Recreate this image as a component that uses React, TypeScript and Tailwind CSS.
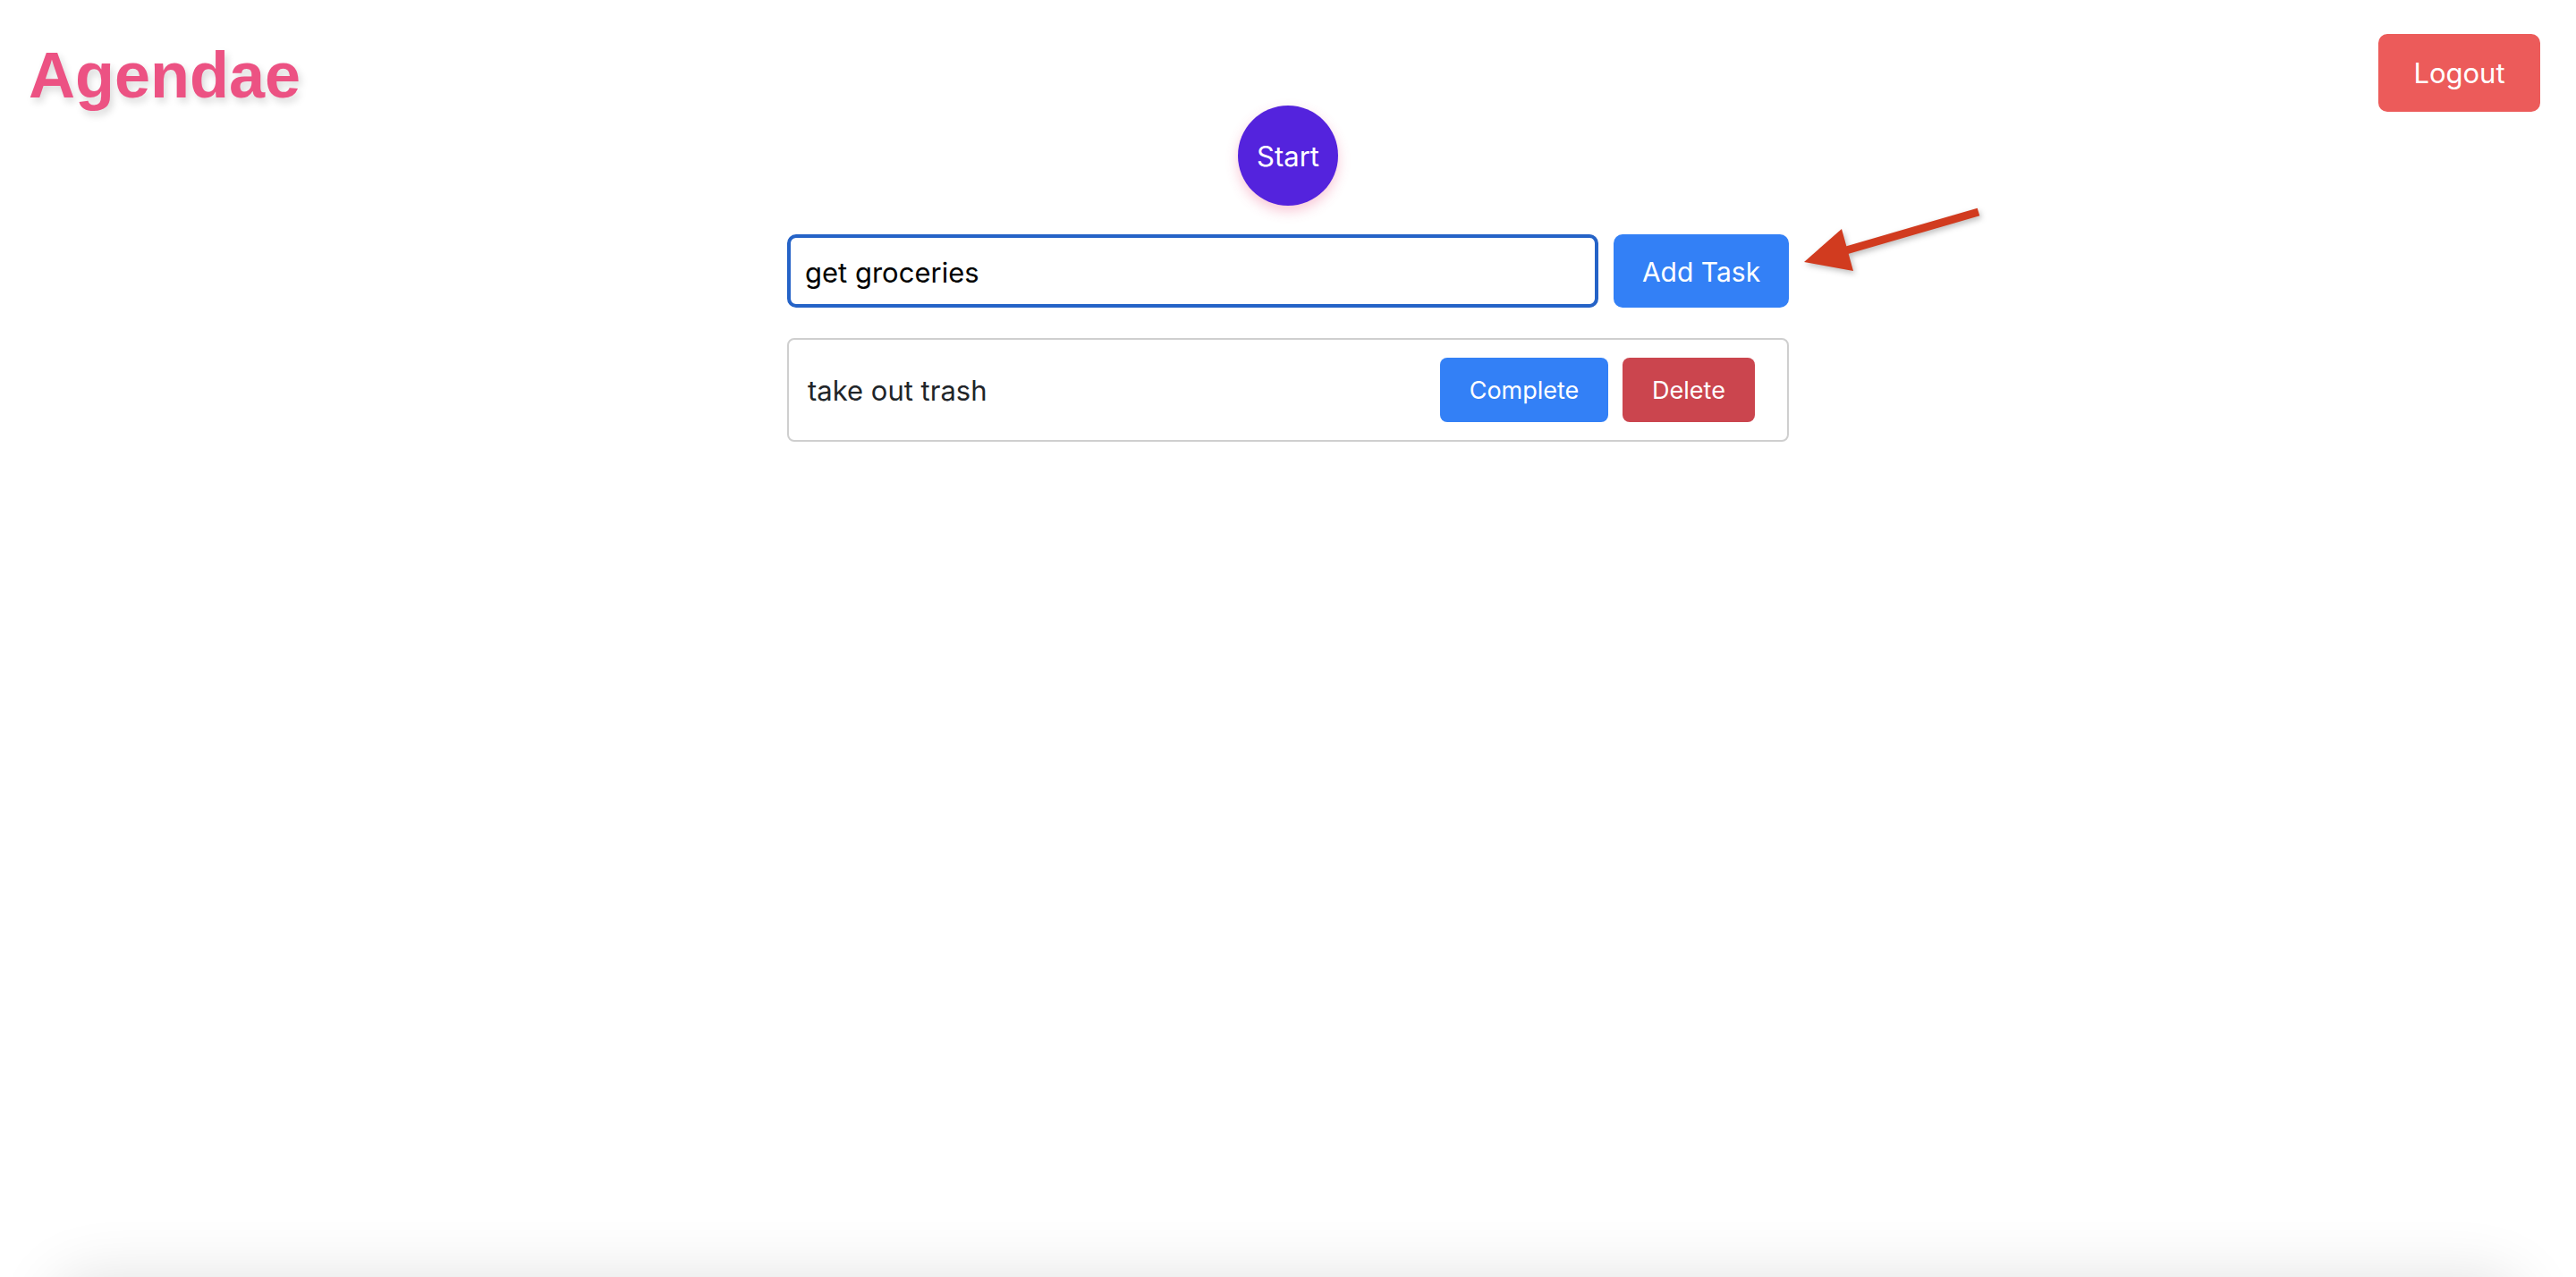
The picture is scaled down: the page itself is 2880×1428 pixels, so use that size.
const Arrow = () => {
  return (
    <svg
      className="absolute left-[2000px] top-[220px] drop-shadow-[2px_3px_3px_rgba(0,0,0,0.25)]"
      width="230"
      height="100"
      viewBox="0 0 230 100"
    >
      <line x1="64" y1="60" x2="212" y2="17" stroke="#d13b1f" strokeWidth="9" />
      <polygon points="17,73 59,36 72,83" fill="#d13b1f" />
    </svg>
  );
};

const App = () => {
  return (
    <div className="h-[1428px] overflow-hidden flex flex-col bg-white font-['Inter','Liberation_Sans',sans-serif]">
      <div className="relative h-[1428px] shrink-0">
        <header className="h-[118px] flex justify-between items-start pt-[38px] pl-[32px] pr-[40px]">
          <h1 className="mt-[10px] text-[72px] leading-none font-bold text-[#ec5283] font-['Liberation_Sans',Arial,sans-serif] [text-shadow:3px_5px_8px_rgba(0,0,0,0.15)]">
            Agendae
          </h1>
          <button className="w-[181px] h-[87px] pt-[2px] rounded-[10px] bg-[#ec5b5a] text-white text-[31px]">
            Logout
          </button>
        </header>

        <div className="flex justify-center">
          <button className="w-[112px] h-[112px] pt-[2px] rounded-full bg-[#5423dd] text-white text-[31px] shadow-[0_6px_14px_rgba(236,72,120,0.3)]">
            Start
          </button>
        </div>

        <div className="w-[1120px] mx-auto mt-[32px] flex gap-[17px]">
          <input
            className="flex-1 h-[82px] border-4 border-[#2563c7] rounded-[10px] px-[16px] pt-[3px] text-[31px] text-black outline-none"
            defaultValue="get groceries"
          />
          <button className="w-[196px] h-[82px] pt-[3px] rounded-[10px] bg-[#3380f6] text-white text-[30px]">
            Add Task
          </button>
        </div>

        <div className="w-[1120px] mx-auto mt-[34px] h-[116px] border-2 border-[#cfcfcf] rounded-[8px] flex items-center justify-between pl-[21px] pr-[36px]">
          <span className="pt-[2px] text-[31px] text-[#212529]">take out trash</span>
          <div className="flex gap-[16px]">
            <button className="w-[188px] h-[72px] pt-[2px] rounded-[8px] bg-[#3380f6] text-white text-[27px]">
              Complete
            </button>
            <button className="w-[148px] h-[72px] pt-[2px] rounded-[8px] bg-[#cb454e] text-white text-[27px]">
              Delete
            </button>
          </div>
        </div>

        <Arrow />
      </div>
      <footer className="shrink-0 h-[80px] mx-[60px] rounded-t-[40px] bg-white shadow-[0_0_70px_rgba(0,0,0,0.12)]" />
    </div>
  );
};

export default App;
